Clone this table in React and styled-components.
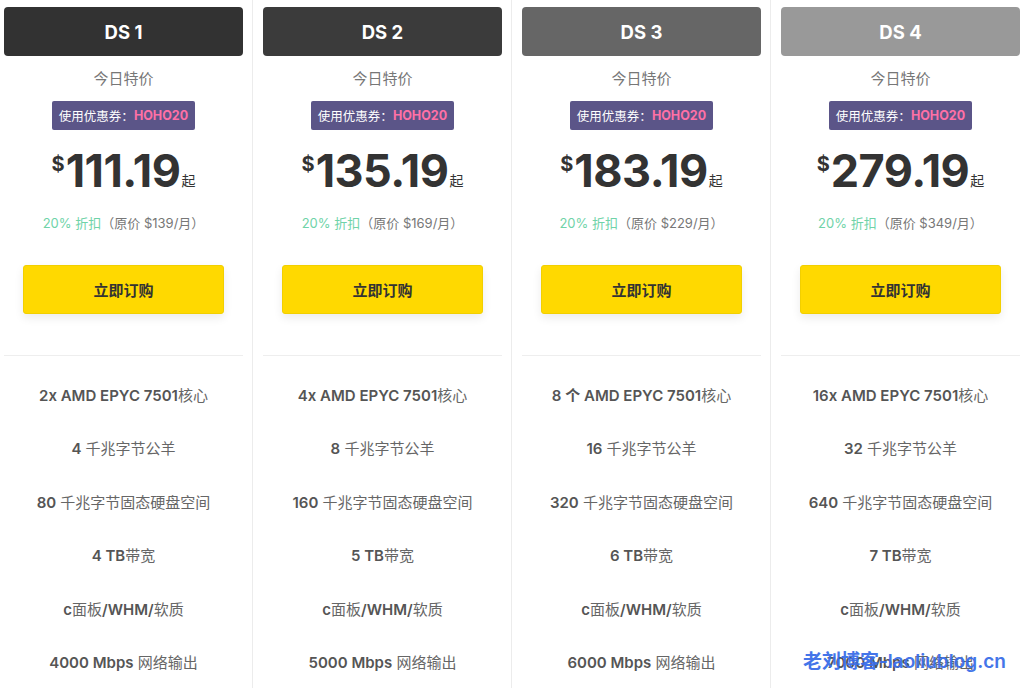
import React from "react";
import styled, { createGlobalStyle } from "styled-components";

const GlobalStyle = createGlobalStyle`
  body {
    margin: 0;
    background: #fff;
    font-family: Inter, "Noto Sans CJK SC", sans-serif;
  }
`;

const plans = [
  { name: "DS 1", head: "#323232", price: "111.19", orig: "$139", cpu: "2x", ram: "4", disk: "80", bw: "4", net: "4000" },
  { name: "DS 2", head: "#3b3b3b", price: "135.19", orig: "$169", cpu: "4x", ram: "8", disk: "160", bw: "5", net: "5000" },
  { name: "DS 3", head: "#666666", price: "183.19", orig: "$229", cpu: "8 个", ram: "16", disk: "320", bw: "6", net: "6000" },
  { name: "DS 4", head: "#999999", price: "279.19", orig: "$349", cpu: "16x", ram: "32", disk: "640", bw: "7", net: "7000" },
];

function App() {
  return (
    <>
      <GlobalStyle />
      <Page>
        {plans.map((p, i) => (
          <Column key={p.name} $first={i === 0}>
            <Header $bg={p.head}>{p.name}</Header>
            <Today>今日特价</Today>
            <Coupon>
              使用优惠券：<Code>HOHO20</Code>
            </Coupon>
            <Price>
              <Dollar>$</Dollar>
              <Amount>{p.price}</Amount>
              <Qi>起</Qi>
            </Price>
            <Discount>
              <Off>20% 折扣</Off>（原价 {p.orig}/月）
            </Discount>
            <OrderButton>立即订购</OrderButton>
            <Divider />
            <Features>
              <Feature><b>{p.cpu} AMD EPYC 7501</b>核心</Feature>
              <Feature><b>{p.ram}</b> 千兆字节公羊</Feature>
              <Feature><b>{p.disk}</b> 千兆字节固态硬盘空间</Feature>
              <Feature><b>{p.bw} TB</b>带宽</Feature>
              <Feature><b>c</b>面板<b>/WHM/</b>软质</Feature>
              <Feature><b>{p.net} Mbps</b> 网络输出</Feature>
            </Features>
          </Column>
        ))}
        <Watermark>老刘博客-laoliublog.cn</Watermark>
      </Page>
    </>
  );
}

export default App;

const Page = styled.div`
  position: relative;
  display: grid;
  grid-template-columns: 253px 259px 259px 1fr;
  width: 1024px;
  height: 688px;
  overflow: hidden;
`;

const Column = styled.div`
  display: flex;
  flex-direction: column;
  align-items: center;
  padding: 7px 9px 0 ${(p) => (p.$first ? "4px" : "10px")};
  border-right: 1px solid #ececec;
  &:last-of-type {
    border-right: none;
  }
`;

const Header = styled.div`
  width: 239px;
  height: 49px;
  border-radius: 4px;
  background: ${(p) => p.$bg};
  color: #fff;
  font-size: 18.5px;
  font-weight: 700;
  display: flex;
  align-items: center;
  justify-content: center;
`;

const Today = styled.div`
  margin-top: 13px;
  color: #777;
  font-size: 15px;
  line-height: 20px;
`;

const Coupon = styled.div`
  margin-top: 12px;
  background: #5b5588;
  color: #fff;
  font-size: 12.5px;
  height: 29px;
  padding: 0 7px;
  border-radius: 2px;
  display: flex;
  align-items: center;
`;

const Code = styled.span`
  color: #ff70a6;
  font-weight: 700;
`;

const Price = styled.div`
  margin-top: 16px;
  display: flex;
  align-items: flex-end;
  color: #333;
  height: 50px;
`;

const Dollar = styled.span`
  font-size: 20px;
  font-weight: 700;
  align-self: flex-start;
  margin-top: 6px;
  margin-right: 1px;
`;

const Amount = styled.span`
  font-size: 45px;
  font-weight: 700;
  letter-spacing: -0.5px;
  line-height: 50px;
`;

const Qi = styled.span`
  font-size: 14px;
  line-height: 14px;
  margin-bottom: 8px;
  margin-left: 1px;
`;

const Discount = styled.div`
  margin-top: 18px;
  font-size: 13px;
  color: #777;
  line-height: 18px;
`;

const Off = styled.span`
  color: #6fd3a8;
`;

const OrderButton = styled.button`
  margin-top: 33px;
  width: 201px;
  height: 49px;
  border: 1px solid #f2cf00;
  border-radius: 3px;
  background: #ffd900;
  color: #333;
  font-family: inherit;
  font-size: 15px;
  font-weight: 700;
  box-shadow: 0 4px 10px rgba(0, 0, 0, 0.08);
`;

const Divider = styled.div`
  margin-top: 41px;
  width: 239px;
  height: 1px;
  background: #eeeeee;
`;

const Features = styled.div`
  display: flex;
  flex-direction: column;
  align-items: center;
  padding-top: 20px;
`;

const Feature = styled.div`
  height: 53.4px;
  font-size: 15px;
  color: #666;
  line-height: 40px;
  b {
    font-weight: 600;
    color: #555;
  }
`;

const Watermark = styled.div`
  position: absolute;
  left: 803px;
  top: 646px;
  color: #3a6ee8;
  font-size: 19px;
  font-weight: 600;
  font-family: Inter, "Noto Sans CJK SC", sans-serif;
  opacity: 0.95;
`;
